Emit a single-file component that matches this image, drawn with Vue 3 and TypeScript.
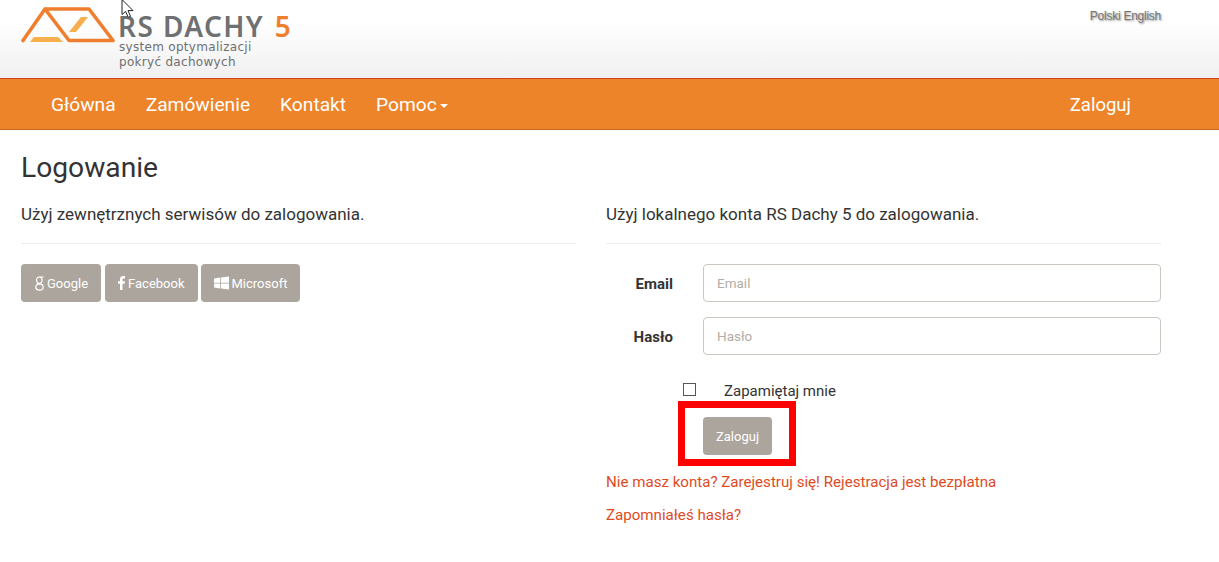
<script setup lang="ts">
const navItems: string[] = ['Główna', 'Zamówienie', 'Kontakt']
</script>

<template>
  <div class="page">
    <header class="top">
      <div class="brand">
        <svg class="roof" width="94" height="38" viewBox="20 6 94 38">
          <path d="M22 40.5 L44 9 H88 L112 40.5 H68 L44 9" fill="none" stroke="#ef7f2f" stroke-width="3.6" stroke-linejoin="round" stroke-linecap="round" />
          <path d="M68 32 H75 L87 17 H80 Z" fill="#f6af4a" />
          <path d="M29 42 L33 37 H57 L62 42 Z" fill="#f6af4a" />
        </svg>
        <div class="brand-text">
          <div class="brand-name">RS DACHY <span>5</span></div>
          <div class="brand-sub">system optymalizacji</div>
          <div class="brand-sub second">pokryć dachowych</div>
        </div>
      </div>
      <div class="langs">Polski English</div>
      <svg class="cursor" width="14" height="20" viewBox="0 0 14 20">
        <path d="M1 0.5 V15.5 L4.6 12.4 L7.3 18.4 L9.6 17.4 L7 11.6 H12 Z" fill="#fff" stroke="#222" stroke-width="1" />
      </svg>
    </header>

    <nav class="nav">
      <div class="nav-inner">
        <ul class="nav-list">
          <li v-for="item in navItems" :key="item">{{ item }}</li>
          <li>Pomoc <i class="caret"></i></li>
        </ul>
        <div class="nav-login">Zaloguj</div>
      </div>
    </nav>

    <main class="container">
      <h2 class="title">Logowanie</h2>
      <div class="cols">
        <section class="col">
          <h4 class="lead">Użyj zewnętrznych serwisów do zalogowania.</h4>
          <hr />
          <div class="socials">
            <button class="btn social google">
              <svg width="9" height="15" viewBox="0 0 9 15">
                <ellipse cx="4.3" cy="4.2" rx="2.8" ry="3.2" fill="none" stroke="#fff" stroke-width="1.2" />
                <ellipse cx="4.5" cy="11" rx="3.7" ry="3.2" fill="none" stroke="#fff" stroke-width="1.2" />
                <path d="M4.5 1 H8.6 M3 7 C2 8 3 8 5 8" fill="none" stroke="#fff" stroke-width="1.2" />
              </svg>
              Google
            </button>
            <button class="btn social">
              <svg width="7" height="14" viewBox="0 0 7 14">
                <path d="M2 14 V7.7 H0 V5.2 H2 V3.4 C2 1.2 3.2 0 5.2 0 H7 V2.5 H5.7 C4.8 2.5 4.5 2.9 4.5 3.7 V5.2 H7 L6.6 7.7 H4.5 V14 Z" fill="#fff" />
              </svg>
              Facebook
            </button>
            <button class="btn social">
              <svg width="15" height="14" viewBox="0 0 16 14">
                <path d="M0 2.2 L6.6 1.2 V6.6 H0 Z M7.4 1.1 L16 0 V6.6 H7.4 Z M0 7.4 H6.6 V12.8 L0 11.8 Z M7.4 7.4 H16 V14 L7.4 12.9 Z" fill="#fff" />
              </svg>
              Microsoft
            </button>
          </div>
        </section>

        <section class="col">
          <h4 class="lead">Użyj lokalnego konta RS Dachy 5 do zalogowania.</h4>
          <hr />
          <form class="form" @submit.prevent>
            <div class="row">
              <label for="em">Email</label>
              <input id="em" type="text" placeholder="Email" />
            </div>
            <div class="row">
              <label for="pw">Hasło</label>
              <input id="pw" type="text" placeholder="Hasło" />
            </div>
            <div class="remember">
              <span class="check"></span>
              <span class="remember-text">Zapamiętaj mnie</span>
            </div>
            <div class="submit-wrap">
              <div class="highlight">
                <button class="btn login">Zaloguj</button>
              </div>
            </div>
            <p class="link">Nie masz konta? Zarejestruj się! Rejestracja jest bezpłatna</p>
            <p class="link">Zapomniałeś hasła?</p>
          </form>
        </section>
      </div>
    </main>
  </div>
</template>

<style>
html, body { margin: 0; background: #fff; }
</style>

<style scoped>
.page {
  width: 1219px;
  height: 562px;
  overflow: hidden;
  position: relative;
  font-family: Roboto, "Noto Sans", sans-serif;
  color: #333;
}
.top {
  height: 78px;
  background: linear-gradient(#fff 0, #fff 28%, #f0f0f0 100%);
  position: relative;
  display: flex;
  justify-content: space-between;
  padding-left: 21px;
  padding-right: 58px;
  box-sizing: border-box;
}
.brand { display: flex; align-items: flex-start; }
.roof { margin-top: 6px; margin-right: 4px; flex: none; }
.brand-text { padding-top: 12px; }
.brand-name {
  font-family: "Noto Sans", sans-serif;
  font-size: 28px;
  line-height: 28px;
  letter-spacing: 1.4px;
  font-weight: 600;
  color: #6f7072;
  white-space: nowrap;
  margin-left: -1px;
}
.brand-name span { color: #ef7f2f; margin-left: 2px; }
.brand-sub {
  font-family: "DejaVu Sans", sans-serif;
  font-size: 12px;
  line-height: 14px;
  letter-spacing: 0.3px;
  color: #6f7072;
  white-space: nowrap;
}
.brand-sub.second { margin-top: 1px; }
.langs {
  font-family: "Liberation Sans", sans-serif;
  font-size: 12px;
  line-height: 14px;
  margin-top: 9px;
  letter-spacing: -0.25px;
  color: #777;
  text-shadow: 1px 1px 2px #888;
}
.cursor { position: absolute; left: 121px; top: -1px; }
.nav {
  height: 52px;
  box-sizing: border-box;
  background: #ee842a;
  border-top: 1px solid #c8461a;
  border-bottom: 1px solid #c8661f;
}
.nav-inner {
  width: 1170px;
  margin-left: 6px;
  padding: 1px 30px 0;
  box-sizing: border-box;
  display: flex;
  justify-content: space-between;
  align-items: center;
  height: 50px;
  color: #fff;
  font-size: 19.2px;
}
.nav-list { list-style: none; display: flex; gap: 30px; margin: 0 0 0 15px; padding: 0; }
.nav-login { margin-right: 15px; font-size: 18.5px; }
.caret {
  display: inline-block;
  width: 0;
  height: 0;
  border-top: 4px solid #fff;
  border-left: 4px solid transparent;
  border-right: 4px solid transparent;
  vertical-align: middle;
  margin-left: -2px;
}
.container { width: 1170px; margin-left: 6px; padding: 0 15px; box-sizing: border-box; }
.title { font-weight: 400; font-size: 28.2px; line-height: 30px; margin: 23px 0 0; color: #333; }
.cols { display: flex; gap: 30px; margin-top: 18px; }
.col { width: 555px; flex: none; }
.lead { font-weight: 400; font-size: 17px; line-height: 20px; margin: 0; color: #333; padding-top: 3px; }
hr { border: 0; border-top: 1px solid #eee; margin: 19px 0 20px; }
.socials { display: flex; gap: 4px; }
.btn {
  height: 38px;
  border: 0;
  border-radius: 4px;
  background: #aca59d;
  color: #fff;
  font-family: inherit;
  font-size: 13px;
  padding: 0 13px;
  display: inline-flex;
  align-items: center;
  gap: 3px;
}
.btn.google { padding: 0 13px 0 14px; }
.social + .social:last-child { margin-left: -1px; }
.row { display: flex; align-items: center; gap: 30px; margin-bottom: 15px; }
.row label { width: 67px; text-align: right; font-weight: 700; font-size: 15px; flex: none; padding-top: 2px; }
.row input {
  width: 458px;
  height: 38px;
  box-sizing: border-box;
  border: 1px solid #ccc6c0;
  border-radius: 4px;
  padding: 0 13px;
  font: inherit;
  font-size: 13.5px;
  outline: 0;
}
.row input::placeholder { color: #b3ada6; opacity: 1; }
.remember { display: flex; align-items: center; padding-left: 77px; height: 24px; margin-top: 22px; font-size: 15px; }
.remember-text { padding-top: 3px; }
.check { width: 11px; height: 11px; border: 1px solid #555; margin-right: 28px; }
.submit-wrap { padding-left: 72px; }
.highlight {
  width: 118px;
  height: 65px;
  box-sizing: border-box;
  border: 7px solid #ff0000;
  display: flex;
  align-items: flex-end;
  justify-content: center;
  padding-bottom: 3px;
}
.login { margin-bottom: 1px; padding: 0 12.5px; margin-left: 1px; }
.link { margin: 0; color: #dd4b1f; font-size: 15.1px; line-height: 20px; margin-top: 6px; }
.link + .link { margin-top: 13px; }
</style>
